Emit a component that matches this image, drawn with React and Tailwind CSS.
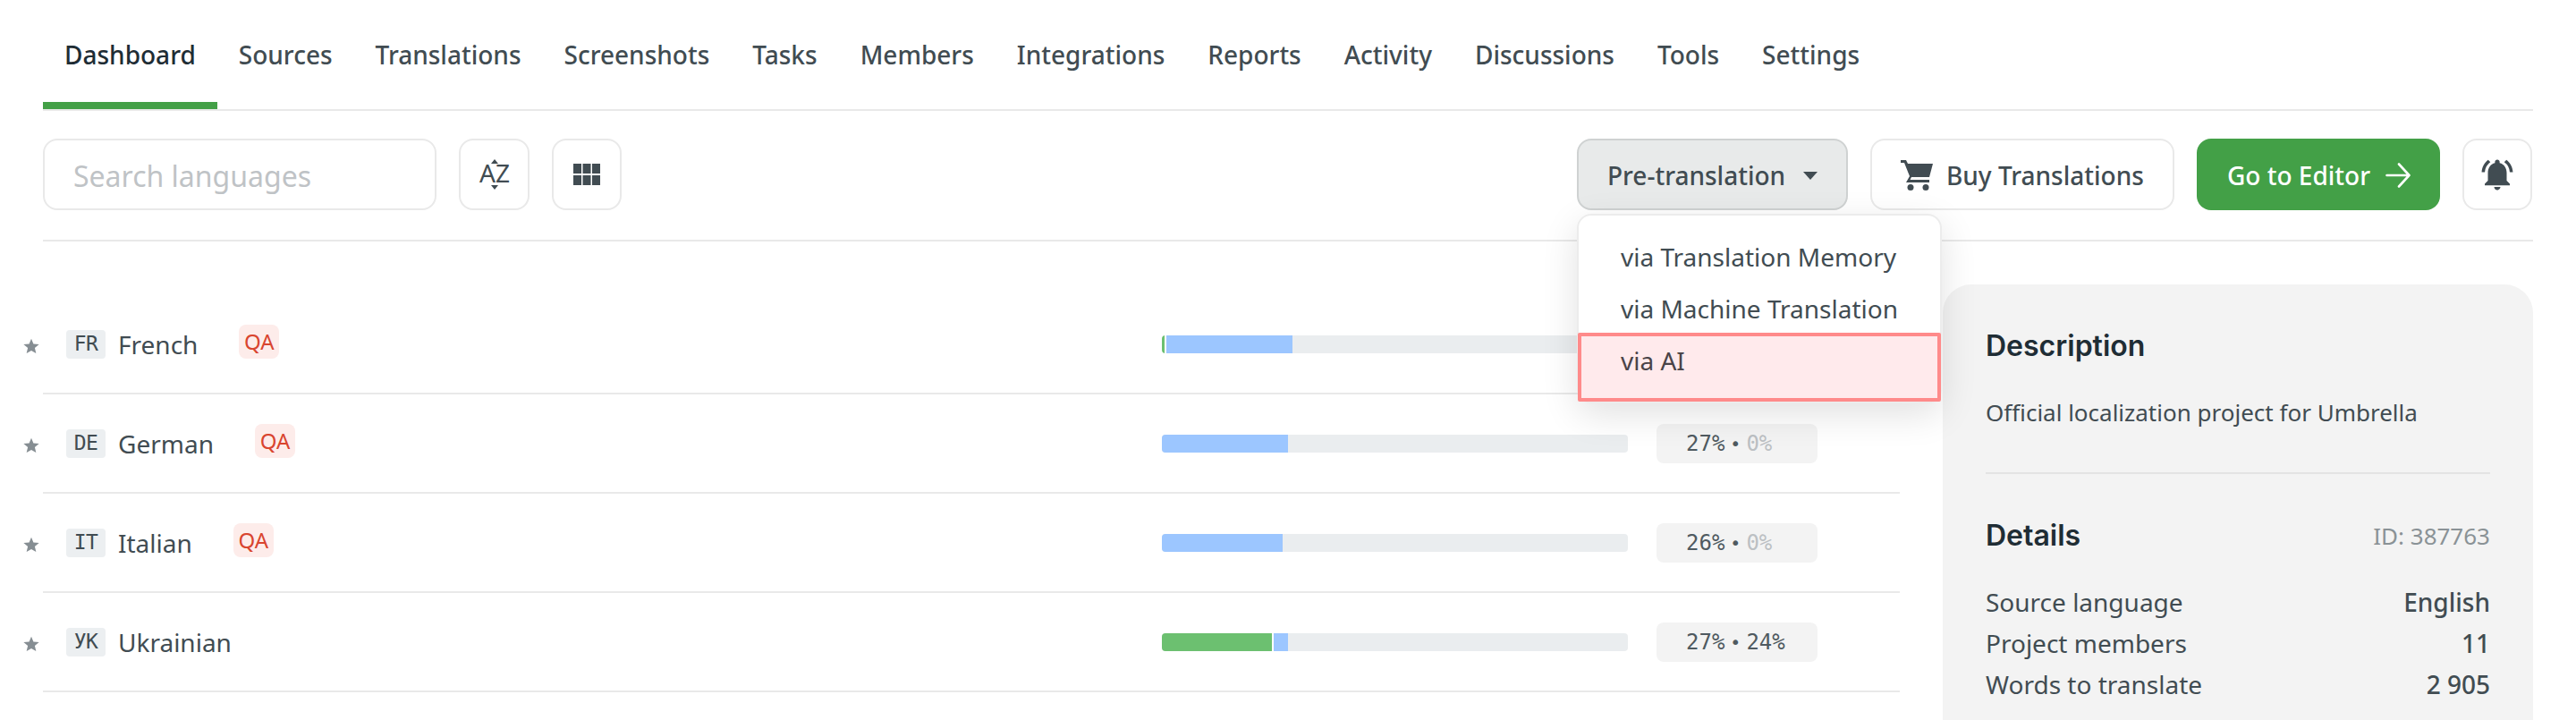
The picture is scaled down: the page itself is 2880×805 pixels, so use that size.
import { MdNotificationsActive } from 'react-icons/md';

const tabs = ['Sources', 'Translations', 'Screenshots', 'Tasks', 'Members', 'Integrations', 'Reports', 'Activity', 'Discussions', 'Tools', 'Settings'];

const languages = [
  { code: 'FR', name: 'French', qa: true, green: 3, gap: 2, blue: 141, pct: '27%', approved: '1%' },
  { code: 'DE', name: 'German', qa: true, green: 0, gap: 0, blue: 141, pct: '27%', approved: '0%' },
  { code: 'IT', name: 'Italian', qa: true, green: 0, gap: 0, blue: 135, pct: '26%', approved: '0%' },
  { code: 'УК', name: 'Ukrainian', qa: false, green: 123, gap: 2, blue: 16, pct: '27%', approved: '24%' },
];

const details = [
  ['Source language', 'English'],
  ['Project members', '11'],
  ['Words to translate', '2 905'],
];

const Star = () => (
  <svg width="18" height="18" viewBox="0 0 24 24" fill="#868e93" className="shrink-0 mt-[5px]">
    <path d="M12 1l3.2 7.6 8.3.7-6.3 5.4 1.9 8.1L12 18.5l-7.1 4.3 1.900-8.100L.5 9.3l8.3-.7z" />
  </svg>
);

const SortIcon = () => (
  <svg width="36" height="46" viewBox="0 -6 36 46" fill="#414c52">
    <path d="M18 0l4 5h-8zM18 34l-4-5h8z" />
    <text x="18" y="26" textAnchor="middle" fontSize="27" fontFamily="Noto Sans" textLength="34" lengthAdjust="spacingAndGlyphs">AZ</text>
  </svg>
);

const GridIcon = () => (
  <svg width="30" height="24" viewBox="0 0 30 24" fill="#414c52">
    <path d="M0 0h9v11H0zM10.500 0h9v11h-9zM21 0h9v11h-9zM0 13h9v11H0zM10.500 13h9v11h-9zM21 13h9v11h-9z" />
  </svg>
);

const CartIcon = () => (
  <svg width="36" height="34" viewBox="0 0 36 34" fill="#414c52">
    <path d="M0 0h6l2 4h28l-4 15H12l-1.500 3H32v3H6l4-7L4 3H0z" />
    <circle cx="11" cy="30.500" r="3.500" />
    <circle cx="28" cy="30.500" r="3.500" />
  </svg>
);

const ArrowIcon = () => (
  <svg width="28" height="28" viewBox="0 0 28 28" fill="none" stroke="#fff" strokeWidth="2.600" strokeLinecap="round" strokeLinejoin="round">
    <path d="M1.500 14h25M15 1.500L26.500 14 15 26.500" />
  </svg>
);

const LanguageRow = ({ lang }) => (
  <div className="flex items-center h-[111px] border-b-2 border-[#e9e9e9]">
    <div className="flex items-center w-[1251px] -ml-[22px]">
      <Star />
      <span className="ml-[30px] w-[44px] h-[32px] flex items-center justify-center rounded-[4px] bg-[#eceff1] font-['DejaVu_Sans_Mono',monospace] text-[23px] tracking-[-0.5px] text-[#414c52]">
        {lang.code}
      </span>
      <span className="ml-[14px] text-[28px] leading-[40px] text-[#414c52]">{lang.name}</span>
      {lang.qa && (
        <span className="ml-[46px] -mt-[6px] w-[45px] h-[38px] flex items-center justify-center rounded-[8px] bg-[#fdecea] text-[24px] text-[#d9452f]">
          QA
        </span>
      )}
    </div>
    <div className="ml-[22px] w-[521px] h-[20px] flex rounded-[4px] overflow-hidden bg-[#eaedef]">
      {lang.green > 0 && <div className="bg-[#6cc070]" style={{ width: lang.green }} />}
      {lang.gap > 0 && <div className="bg-white" style={{ width: lang.gap }} />}
      <div className="bg-[#9cc6ff]" style={{ width: lang.blue }} />
    </div>
    <div className="ml-[32px] w-[180px] h-[44px] flex items-center pl-[33px] rounded-[8px] bg-[#f3f3f3] font-['DejaVu_Sans_Mono',monospace] text-[24px] text-[#4f5a60]">
      <span>{lang.pct}</span>
      <span className="mx-[6px] text-[20px]">•</span>
      <span className={lang.approved === '0%' ? 'text-[#bcc0c3]' : ''}>{lang.approved}</span>
    </div>
  </div>
);

export default function App() {
  return (
    <div className="w-[2880px] h-[805px] overflow-hidden bg-white pl-[48px] pr-[48px] font-['Noto_Sans',sans-serif] text-[#414c52]">
      <nav className="flex h-[124px] border-b-2 border-[#e9e9e9] text-[28px] font-medium">
        <div className="h-[122px] px-[24px] pt-[41px] leading-[40px] border-b-8 border-[#43a047] text-[#1f2d35]">Dashboard</div>
        {tabs.map((tab) => (
          <div key={tab} className="px-[24px] pt-[41px] leading-[40px]">{tab}</div>
        ))}
      </nav>

      <div className="flex items-center h-[146px] border-b-2 border-[#e9e9e9] pb-[2px] pr-px">
        <div className="w-[440px] h-[80px] pl-[32px] pt-[3px] flex items-center rounded-[16px] border-2 border-[#e9e9e9] text-[32px] text-[#bfc3c6]">
          Search languages
        </div>
        <div className="ml-[25px] w-[79px] h-[80px] flex items-center justify-center rounded-[16px] border-2 border-[#e9e9e9]">
          <SortIcon />
        </div>
        <div className="ml-[25px] w-[78px] h-[80px] flex items-center justify-center rounded-[16px] border-2 border-[#e9e9e9]">
          <GridIcon />
        </div>

        <div className="relative ml-auto">
          <div className="w-[303px] h-[80px] pl-[32px] pt-[2px] flex items-center rounded-[16px] border-2 border-[#cfd2d2] bg-[#e8eaea] text-[28px] font-medium">
            Pre-translation
            <span className="ml-[20px] w-0 h-0 border-x-[8px] border-x-transparent border-t-[9px] border-t-[#414c52]" />
          </div>
          <div className="absolute z-10 top-[84px] left-0 w-[408px] pt-[17px] rounded-[16px] border-2 border-[#ececec] bg-white text-[28px] shadow-[0_12px_40px_rgba(0,0,0,0.12)]">
            <div className="h-[58px] pl-[47px] leading-[58px]">via Translation Memory</div>
            <div className="h-[58px] pl-[47px] leading-[58px]">via Machine Translation</div>
            <div className="-mx-px -mt-[2px] h-[77px] pl-[44px] leading-[54px] rounded-[2px] border-4 border-[#ff8a8a] bg-[#ffeaec] text-[#4a4448]">via AI</div>
          </div>
        </div>

        <div className="ml-[25px] w-[340px] h-[80px] pl-[32px] pt-[2px] flex items-center gap-[15px] rounded-[16px] border-2 border-[#e9e9e9] text-[28px] font-medium">
          <CartIcon />
          Buy Translations
        </div>
        <div className="ml-[25px] w-[272px] h-[80px] pl-[34px] pt-[2px] flex items-center gap-[17px] rounded-[16px] bg-[#43a047] text-[28px] font-medium text-white">
          Go to Editor
          <ArrowIcon />
        </div>
        <div className="ml-[25px] w-[78px] h-[80px] flex items-center justify-center rounded-[16px] border-2 border-[#e9e9e9]">
          <MdNotificationsActive size={42} color="#414c52" />
        </div>
      </div>

      <div className="flex items-start gap-[48px]">
        <div className="w-[2076px] pt-[60px]">
          {languages.map((lang) => (
            <LanguageRow key={lang.code} lang={lang} />
          ))}
        </div>

        <aside className="w-[660px] h-[600px] mt-[48px] pl-[48px] pr-[48px] pt-[46px] rounded-[32px] bg-[#f3f3f3] text-[28px]">
          <h2 className="font-['Inter',sans-serif] text-[32px] leading-[46px] font-semibold text-[#1f2d35]">Description</h2>
          <p className="mt-[28px] text-[26px] leading-[46px]">Official localization project for Umbrella</p>
          <div className="mt-[44px] border-t-2 border-[#e3e3e3]" />
          <div className="mt-[46px] flex items-center justify-between">
            <h2 className="font-['Inter',sans-serif] text-[32px] leading-[46px] font-semibold text-[#1f2d35]">Details</h2>
            <span className="text-[26px] text-[#8a9296]">ID: 387763</span>
          </div>
          <div className="mt-[28px]">
            {details.map(([label, value]) => (
              <div key={label} className="flex justify-between h-[46px] leading-[46px]">
                <span>{label}</span>
                <span className="font-medium">{value}</span>
              </div>
            ))}
          </div>
        </aside>
      </div>
    </div>
  );
}
